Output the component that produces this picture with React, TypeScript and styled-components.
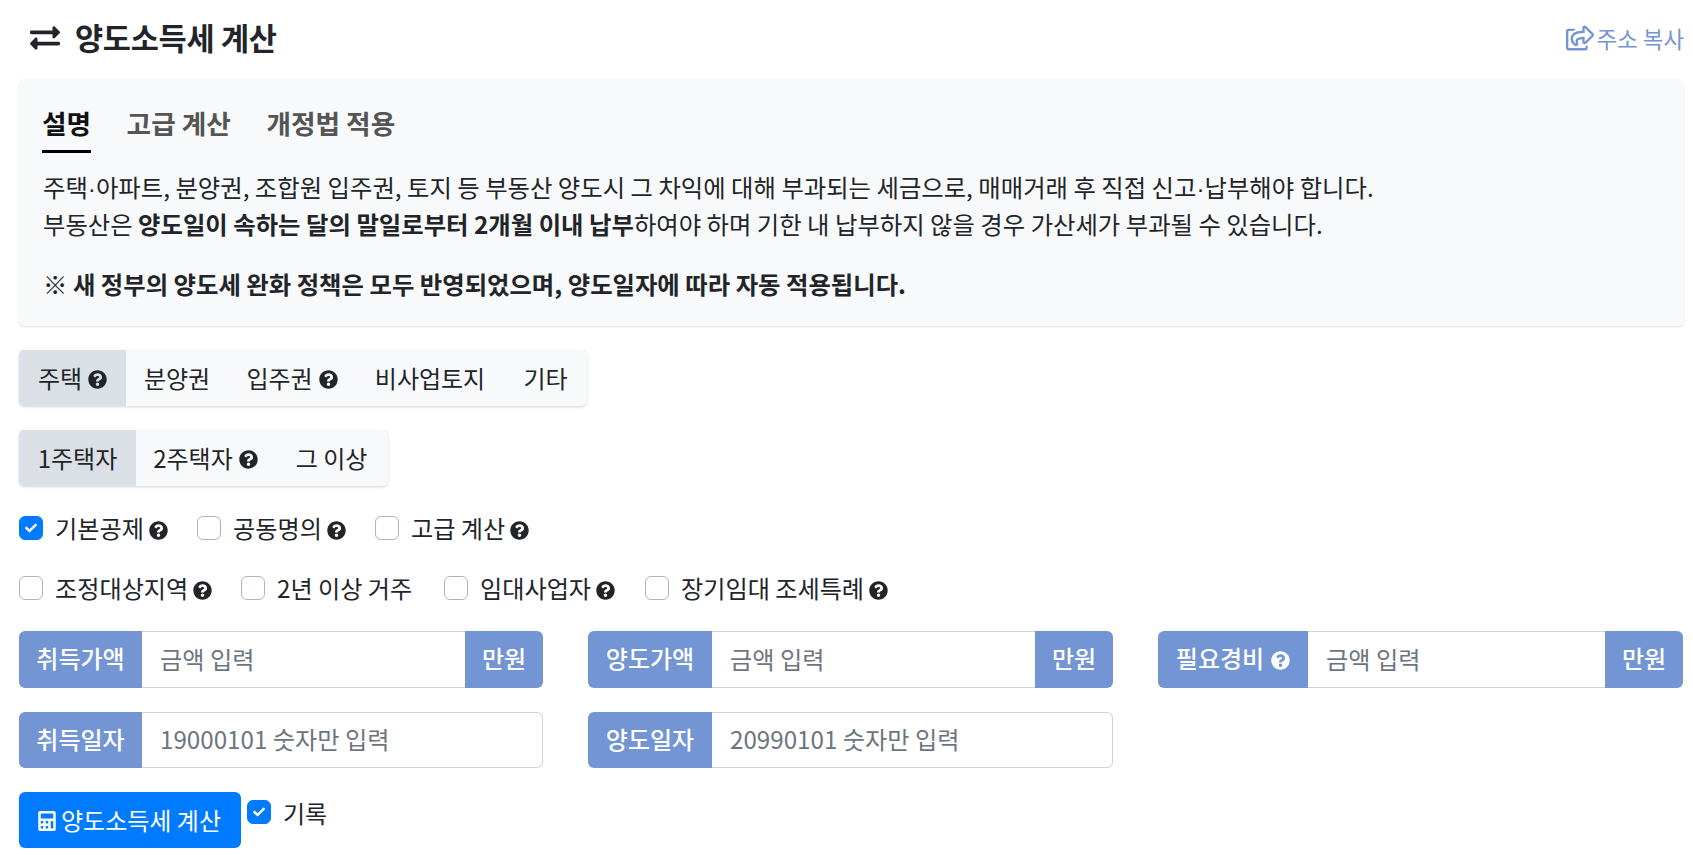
import React from "react";
import styled, { createGlobalStyle } from "styled-components";
import { FaExchangeAlt, FaQuestionCircle, FaCalculator, FaRegShareSquare, FaCheck } from "react-icons/fa";

const Global = createGlobalStyle`
  * { box-sizing: border-box; }
  html, body { margin: 0; padding: 0; background: #fff; overflow: hidden; }
  body { font-family: "Noto Sans CJK KR", "Noto Sans", sans-serif; font-size: 24px; color: #212529; }
  input::placeholder { color: #6c757d; opacity: 1; }
`;
const Page = styled.div`
  width: 1693px; height: 855px; padding: 0 9px 0 19px; display: flex; flex-direction: column;
`;
const Header = styled.header`
  height: 79px; display: flex; align-items: center; justify-content: space-between; padding: 0 0 3px 11px;
`;
const Title = styled.h1`
  margin: 0; display: flex; align-items: center; gap: 15px; font-size: 30.6px; font-weight: 700; color: #212529;
  letter-spacing: -0.3px; line-height: 40px;
`;
const TitleText = styled.span`
  margin-top: -3px;
`;
const CopyLink = styled.a`
  display: flex; align-items: center; gap: 3px; font-size: 22.4px; color: #7395d3; text-decoration: none;
`;
const Card = styled.section`
  height: 247px; background: #f8f9fa; border-radius: 5px; padding: 25px 23px 0 24px;
  box-shadow: 0 1px 2px rgba(0,0,0,.12);
`;
const Tabs = styled.div`
  display: flex; gap: 35.5px; height: 65px; margin-left: -1px;
`;
const Tab = styled.div<{ $active?: boolean }>`
  font-size: 26.7px; font-weight: 700; line-height: 38px; height: 49px;
  color: ${(p) => (p.$active ? "#111" : "#555")};
  border-bottom: ${(p) => (p.$active ? "3px solid #000" : "none")};
`;
const Para = styled.p<{ $gap?: number }>`
  margin: 0 0 ${(p) => p.$gap ?? 0}px; font-size: 24.37px; line-height: 35.2px; color: #212529; white-space: nowrap;
`;
const Dot = styled.span`
  font-family: "Liberation Sans", sans-serif;
`;
const Segment = styled.div`
  align-self: flex-start; display: flex; height: 56px; margin-top: 24px; background: #f8f9fa; border-radius: 5px;
  box-shadow: 0 1px 3px rgba(0,0,0,.16); overflow: hidden;
`;
const SegButton = styled.div<{ $active?: boolean; $w: number }>`
  width: ${(p) => p.$w}px; display: flex; align-items: center; justify-content: center; gap: 6px; font-size: 24px;
  padding-bottom: 2px; color: #212529; background: ${(p) => (p.$active ? "#dae0e5" : "transparent")};
`;
const Help = styled(FaQuestionCircle)<{ $light?: boolean }>`
  font-size: 19px; color: ${(p) => (p.$light ? "#fff" : "#212529")}; flex: none; margin-top: 5px;
`;
const CheckRow = styled.div<{ $top: number }>`
  display: flex; align-items: center; height: 24px; margin-top: ${(p) => p.$top}px;
`;
const Option = styled.label<{ $w: number }>`
  width: ${(p) => p.$w}px; flex: none; display: flex; align-items: center; font-size: 24.15px; white-space: nowrap;
`;
const OptionText = styled.span`
  margin-top: -1px;
`;
const Box = styled.span<{ $on?: boolean }>`
  width: 24px; height: 24px; flex: none; border-radius: 6px; margin-right: 12px; display: flex; align-items: center;
  justify-content: center; color: #fff; font-size: 12px;
  background: ${(p) => (p.$on ? "#007bff" : "#fff")};
  border: 1px solid ${(p) => (p.$on ? "#007bff" : "#adb5bd")};
`;
const OptionHelp = styled(Help)`margin-left: 5px;`;
const FieldGrid = styled.div`
  display: grid; grid-template-columns: 524px 525px 525px; column-gap: 45px; row-gap: 24px; margin-top: 31px;
`;
const Field = styled.div`
  display: flex; height: 56.5px;
`;
const Addon = styled.div<{ $side: "l" | "r"; $w: number }>`
  width: ${(p) => p.$w}px; flex: none; display: flex; align-items: center; justify-content: center; gap: 7px;
  padding-bottom: 3px; background: #7395d3; color: #fff; font-size: 24px; font-weight: 500;
  border-radius: ${(p) => (p.$side === "l" ? "6px 0 0 6px" : "0 6px 6px 0")};
`;
const Input = styled.input<{ $end?: boolean }>`
  flex: 1; min-width: 0; height: 100%; padding: 0 18px 2px; background: #fff; font: inherit; font-size: 24.2px; color: #495057;
  border: 1px solid #ced4da; border-left: none; outline: none;
  border-right: ${(p) => (p.$end ? "1px solid #ced4da" : "none")};
  border-radius: ${(p) => (p.$end ? "0 6px 6px 0" : "0")};
`;
const Actions = styled.div`
  display: flex; align-items: flex-start; margin-top: 24px;
`;
const Submit = styled.button`
  width: 222px; height: 56px; padding: 0 2px 2px 0; border: none; border-radius: 6px; background: #007bff; color: #fff;
  display: flex; align-items: center; justify-content: center; gap: 4px; font: inherit; font-size: 24px;
`;
const CalcIcon = styled(FaCalculator)`
  font-size: 20px; margin-top: 4px;
`;
const Record = styled.label`
  display: flex; align-items: center; margin: 8px 0 0 6px; font-size: 24px; height: 24px;
`;

const fmtHelp = <Help />;

const options1 = [
  { t: "기본공제", w: 178, on: true, h: true },
  { t: "공동명의", w: 178, h: true },
  { t: "고급 계산", w: 170, h: true },
];
const options2 = [
  { t: "조정대상지역", w: 222, h: true },
  { t: "2년 이상 거주", w: 203 },
  { t: "임대사업자", w: 201, h: true },
  { t: "장기임대 조세특례", w: 260, h: true },
];

export default function App() {
  return (
    <Page>
      <Global />
      <Header>
        <Title><FaExchangeAlt size={30} /><TitleText>양도소득세 계산</TitleText></Title>
        <CopyLink href="#" onClick={(e) => e.preventDefault()}><FaRegShareSquare size={28} />주소 복사</CopyLink>
      </Header>
      <Card>
        <Tabs>
          <Tab $active>설명</Tab>
          <Tab>고급 계산</Tab>
          <Tab>개정법 적용</Tab>
        </Tabs>
        <Para>주택<Dot>·</Dot>아파트, 분양권, 조합원 입주권, 토지 등 부동산 양도시 그 차익에 대해 부과되는 세금으로, 매매거래 후 직접 신고<Dot>·</Dot>납부해야 합니다.</Para>
        <Para $gap={25}>부동산은 <b>양도일이 속하는 달의 말일로부터 2개월 이내 납부</b>하여야 하며 기한 내 납부하지 않을 경우 가산세가 부과될 수 있습니다.</Para>
        <Para><b>※ 새 정부의 양도세 완화 정책은 모두 반영되었으며, 양도일자에 따라 자동 적용됩니다.</b></Para>
      </Card>
      <Segment>
        <SegButton $active $w={107}>주택 {fmtHelp}</SegButton>
        <SegButton $w={102}>분양권</SegButton>
        <SegButton $w={128}>입주권 {fmtHelp}</SegButton>
        <SegButton $w={148}>비사업토지</SegButton>
        <SegButton $w={83}>기타</SegButton>
      </Segment>
      <Segment>
        <SegButton $active $w={117}>1주택자</SegButton>
        <SegButton $w={139}>2주택자 {fmtHelp}</SegButton>
        <SegButton $w={113}>그 이상</SegButton>
      </Segment>
      <CheckRow $top={30}>
        {options1.map((o) => (
          <Option key={o.t} $w={o.w}><Box $on={o.on}>{o.on && <FaCheck />}</Box><OptionText>{o.t}</OptionText>{o.h && <OptionHelp />}</Option>
        ))}
      </CheckRow>
      <CheckRow $top={36}>
        {options2.map((o) => (
          <Option key={o.t} $w={o.w}><Box /><OptionText>{o.t}</OptionText>{o.h && <OptionHelp />}</Option>
        ))}
      </CheckRow>
      <FieldGrid>
        <Field><Addon $side="l" $w={123}>취득가액</Addon><Input placeholder="금액 입력" /><Addon $side="r" $w={78}>만원</Addon></Field>
        <Field><Addon $side="l" $w={124}>양도가액</Addon><Input placeholder="금액 입력" /><Addon $side="r" $w={78}>만원</Addon></Field>
        <Field><Addon $side="l" $w={150}>필요경비 <Help $light /></Addon><Input placeholder="금액 입력" /><Addon $side="r" $w={78}>만원</Addon></Field>
        <Field><Addon $side="l" $w={123}>취득일자</Addon><Input $end placeholder="19000101 숫자만 입력" /></Field>
        <Field><Addon $side="l" $w={124}>양도일자</Addon><Input $end placeholder="20990101 숫자만 입력" /></Field>
      </FieldGrid>
      <Actions>
        <Submit type="button"><CalcIcon />양도소득세 계산</Submit>
        <Record><Box $on><FaCheck /></Box>기록</Record>
      </Actions>
    </Page>
  );
}
